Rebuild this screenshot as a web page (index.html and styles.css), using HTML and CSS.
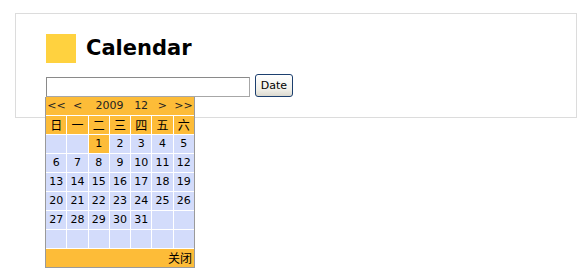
FILE: index.html
```html
<!DOCTYPE html>
<html lang="zh-CN">
<head>
  <meta charset="UTF-8" />
  <title>Calendar</title>
  <link rel="stylesheet" href="styles.css">
</head>
<body>
  <div class="box">
    <!-- Page title -->
    <div class="title">
      <span class="mark"></span>
      <h1>Calendar</h1>
    </div>

    <!-- Date field with popup calendar -->
    <div class="field-row">
      <div class="field">
        <input type="text" id="date" autofocus />
        <div class="cal">
          <div class="cal-head">
            <span>&lt;&lt;</span>
            <span>&lt;</span>
            <span class="wide">2009</span>
            <span>12</span>
            <span>&gt;</span>
            <span>&gt;&gt;</span>
          </div>
          <div class="cal-grid">
            <span class="wd">日</span><span class="wd">一</span><span class="wd">二</span><span class="wd">三</span><span class="wd">四</span><span class="wd">五</span><span class="wd">六</span>
            <span></span><span></span><span class="today">1</span><span>2</span><span>3</span><span>4</span><span>5</span>
            <span>6</span><span>7</span><span>8</span><span>9</span><span>10</span><span>11</span><span>12</span>
            <span>13</span><span>14</span><span>15</span><span>16</span><span>17</span><span>18</span><span>19</span>
            <span>20</span><span>21</span><span>22</span><span>23</span><span>24</span><span>25</span><span>26</span>
            <span>27</span><span>28</span><span>29</span><span>30</span><span>31</span><span></span><span></span>
            <span></span><span></span><span></span><span></span><span></span><span></span><span></span>
          </div>
          <div class="cal-foot">关闭</div>
        </div>
      </div>
      <button type="button">Date</button>
    </div>
  </div>
</body>
</html>
```

FILE: styles.css
```css
/* Page frame */
html, body {
  min-height: 100%;
}
body {
  margin: 0;
  min-height: 274px;
  font-family: "DejaVu Sans", Verdana, "Noto Sans CJK SC", sans-serif;
  background: #fff;
  color: #000;
}
.box {
  box-sizing: border-box;
  width: 562px;
  margin: 13px 0 0 15px;
  padding: 20px 30px 20px 30px;
  border: 1px solid #dcdcdc;
}
.title {
  display: flex;
  align-items: center;
  gap: 10px;
  height: 29px;
}
.mark {
  width: 30px;
  height: 29px;
  background: #ffd23f;
}
h1 {
  margin: 0;
  font-size: 21px;
  font-weight: bold;
  line-height: 29px;
}

/* Input + button */
.field-row {
  display: flex;
  align-items: flex-end;
  gap: 5px;
  margin-top: 11px;
}
.field {
  position: relative;
}
.field input {
  display: block;
  box-sizing: border-box;
  width: 204px;
  height: 20px;
  margin: 0;
  padding: 0 2px;
  border: 1px solid #a7a7a7;
  border-top-color: #8a8a8a;
  border-left-color: #8a8a8a;
  font: 12px "DejaVu Sans", sans-serif;
  outline: none;
}
button {
  box-sizing: border-box;
  width: 38px;
  height: 23px;
  padding: 0;
  border: 1px solid #1c3f6e;
  border-radius: 3px;
  background: linear-gradient(#ffffff, #f0efe8 70%, #dcdad0);
  font: 11px "DejaVu Sans", sans-serif;
  color: #000;
}

/* Popup calendar */
.cal {
  position: absolute;
  z-index: 10;
  top: 100%;
  left: -1px;
  width: 148px;
  border: 1px solid #9a9a9a;
  border-top: none;
  background: #fff;
  font-size: 11px;
  font-family: "DejaVu Sans", "Noto Sans CJK SC", sans-serif;
}
.cal-head {
  display: grid;
  grid-template-columns: repeat(7, 1fr);
  height: 18px;
  line-height: 18px;
  margin-bottom: 1px;
  background: #fdbc38;
  color: #222;
  text-align: center;
}
.cal-head .wide {
  grid-column: span 2;
}
.cal-grid {
  display: grid;
  grid-template-columns: repeat(7, 1fr);
  gap: 1px;
}
.cal-grid span {
  display: block;
  height: 18px;
  line-height: 18px;
  text-align: center;
  background: #d3dcfb;
}
.cal-grid .wd,
.cal-grid .today {
  background: #fdbc38;
}
.cal-grid .wd {
  font-family: "Noto Sans CJK SC", sans-serif;
  font-size: 12px;
}
.cal-foot {
  height: 18px;
  line-height: 18px;
  margin-top: 1px;
  padding-right: 2px;
  background: #fdbc38;
  text-align: right;
  font-family: "Noto Sans CJK SC", sans-serif;
  font-size: 12px;
}
```
